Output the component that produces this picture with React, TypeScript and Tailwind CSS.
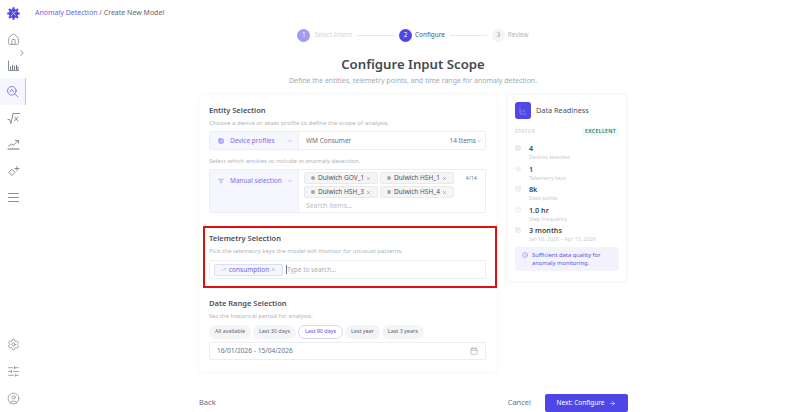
import { ArrowRight, AudioWaveform, Calendar, CalendarDays, ChartLine, ChevronDown, ChevronRight, CircleUser, Clock, Cpu, Database, Info, House, ListFilter, Settings, SlidersHorizontal, TrendingUp, X } from 'lucide-react'

const FONT = "font-['Noto_Sans','Open_Sans',sans-serif]"

function Logo() {
  return (
    <svg width="13" height="13" viewBox="0 0 24 24">
      <g fill="#4f46e5">
        <circle cx="12" cy="12" r="8.5" />
        {[0, 45, 90, 135, 180, 225, 270, 315].map((a) => (
          <rect key={a} x="10" y="0.5" width="4" height="5" transform={`rotate(${a} 12 12)`} />
        ))}
      </g>
      <path d="M7 17 17 7M9 8l7 8" stroke="#c7d2fe" strokeWidth="1.6" fill="none" />
    </svg>
  )
}

function Glyph({ children, color = '#6b7280' }: { children: React.ReactNode; color?: string }) {
  return (
    <svg width="13" height="13" viewBox="0 0 13 13" fill="none" stroke={color} strokeWidth="0.8" strokeLinecap="round" strokeLinejoin="round">
      {children}
    </svg>
  )
}

function Sidebar() {
  const iconClass = 'w-[13px] h-[13px] text-[#6b7280]'
  return (
    <aside className="relative w-[26px] h-full flex flex-col items-stretch shrink-0">
      <div className="h-[26px] flex items-center justify-center">
        <Logo />
      </div>
      <div className="flex flex-col">
        <div className="h-[26px] flex items-center justify-center"><House className={iconClass} strokeWidth={1.2} /></div>
        <div className="h-[26px] flex items-center justify-center">
          <Glyph>
            <path d="M1.5 2v9.5h10" />
            <path d="M3.5 10.5V8M5.5 10.5V6.5M7.5 10.5V7.5M9.5 10.5V6.5M11 10.5V8" strokeWidth="1" />
          </Glyph>
        </div>
        <div className="h-[27px] flex items-center justify-center bg-[#f6f6fe] border-r border-[#c3c2ee]">
          <Glyph color="#6d62e8">
            <circle cx="5.8" cy="5.8" r="4.3" />
            <path d="M9 9l3 3M4 7l1.8-2.6L7.6 7" />
          </Glyph>
        </div>
        <div className="h-[26px] flex items-center justify-center">
          <Glyph>
            <path d="M1 7.5h1.5l1.5 4L6 1.5h6.5" />
            <path d="M7.5 5l3.5 4M11 5L7.5 9" />
          </Glyph>
        </div>
        <div className="h-[27px] flex items-center justify-center">
          <Glyph>
            <path d="M1.5 8l3-2 2 1L11 3M8.5 2.5H11.5V5" />
            <path d="M1 11h11" strokeWidth="1" />
          </Glyph>
        </div>
        <div className="h-[26px] flex items-center justify-center">
          <Glyph>
            <path d="M5 4.5L8 7.5 5 10.5 2 7.5Z" />
            <path d="M10 1.5v4M8 3.5h4" />
          </Glyph>
        </div>
        <div className="h-[26px] flex items-center justify-center">
          <Glyph>
            <path d="M1.5 2.5h10M1.5 6.5h10M1.5 10.5h10" />
          </Glyph>
        </div>
      </div>
      <div className="mt-auto flex flex-col pb-[1px]">
        <div className="h-[27px] flex items-center justify-center"><Settings className={iconClass} strokeWidth={1.2} /></div>
        <div className="h-[27px] flex items-center justify-center"><SlidersHorizontal className={iconClass} strokeWidth={1.2} /></div>
        <div className="h-[26px] flex items-center justify-center"><CircleUser className={iconClass} strokeWidth={1.1} /></div>
      </div>
      <ChevronRight className="absolute left-[17px] top-[48px] w-[10px] h-[10px] text-[#4b5563]" strokeWidth={1.5} />
    </aside>
  )
}

function Stepper() {
  return (
    <div className="flex items-center justify-center h-[18px] text-[6.4px]">
      <span className="w-[13px] h-[13px] rounded-full bg-[#a29bf5] text-white flex items-center justify-center">1</span>
      <span className="ml-[4px] text-[#d1d5db]">Select Intent</span>
      <span className="w-[37px] h-px bg-[#e5e7eb] mx-[5px]" />
      <span className="w-[13px] h-[13px] rounded-full bg-[#4f46e5] text-white flex items-center justify-center">2</span>
      <span className="ml-[3px] text-[#4b5563]">Configure</span>
      <span className="w-[37px] h-px bg-[#e5e7eb] mx-[5px]" />
      <span className="w-[13px] h-[13px] rounded-full bg-[#f3f4f6] text-[#9ca3af] flex items-center justify-center">3</span>
      <span className="ml-[3px] text-[#b0b5bd]">Review</span>
    </div>
  )
}

function Chip({ label }: { label: string }) {
  return (
    <span className="h-[12px] w-[74px] px-[6px] rounded-[2px] bg-[#f5f5f6] border border-[#e9eaec] flex items-center text-[6.5px] text-[#4b5563] whitespace-nowrap">
      <span className="w-[4px] h-[4px] rounded-full bg-[#a3a8b0] mr-[3px] shrink-0" />
      {label}
      <X className="w-[5px] h-[5px] ml-auto text-[#6b7280] shrink-0" />
    </span>
  )
}

function EntitySection() {
  return (
    <section className="px-[10px] pt-[9px]">
      <h2 className="text-[7.5px] leading-[12px] font-semibold text-[#4b5058]">Entity Selection</h2>
      <p className="mt-[2px] text-[6.1px] leading-[9px] text-[#b0b5bc]">Choose a device or asset profile to define the scope of analysis.</p>
      <div className="mt-[4px] h-[19px] w-[277px] flex rounded-[2px] border border-[#eceef1] text-[6.5px]">
        <div className="w-[89px] bg-[#f6f6fe] border-r border-[#eceef1] flex items-center pl-[8px] pr-[5px] text-[#7a70ec] whitespace-nowrap">
          <Cpu className="w-[6px] h-[6px] mr-[6px]" />
          Device profiles
          <ChevronDown className="w-[6px] h-[6px] ml-auto text-[#9a94ee]" />
        </div>
        <div className="flex-1 flex items-center pl-[7px] text-[#6b7280]">
          WM Consumer
          <span className="ml-auto">14 Items</span>
          <ChevronDown className="w-[6px] h-[6px] mr-[3px] text-[#9ca3af]" />
        </div>
      </div>
      <p className="mt-[6px] text-[6.1px] leading-[9px] text-[#b0b5bc]">Select which entities to include in anomaly detection.</p>
      <div className="mt-[4px] h-[44px] w-[277px] flex rounded-[2px] border border-[#eceef1] text-[6.5px]">
        <div className="w-[89px] bg-[#f6f6fe] border-r border-[#eceef1] flex items-start pt-[6px] pl-[8px] pr-[5px] text-[#7a70ec] whitespace-nowrap">
          <ListFilter className="w-[6px] h-[6px] mr-[6px] mt-[2px]" />
          Manual selection
          <ChevronDown className="w-[6px] h-[6px] ml-auto mt-[2px] text-[#9a94ee]" />
        </div>
        <div className="relative flex-1 pl-[5px] pt-[2px]">
          <div className="grid grid-cols-[74px_74px] gap-x-[2px] gap-y-[2px]">
            <Chip label="Dulwich GOV_1" />
            <Chip label="Dulwich HSH_1" />
            <Chip label="Dulwich HSH_3" />
            <Chip label="Dulwich HSH_4" />
          </div>
          <p className="mt-[3px] ml-[2px] text-[6.8px] leading-[10px] text-[#b8bcc3]">Search items...</p>
          <span className="absolute right-[8px] top-[4px] text-[5.5px] text-[#7b8088]">4/14</span>
        </div>
      </div>
    </section>
  )
}

function TelemetrySection() {
  return (
    <section className="mt-[13px] ml-[4px] h-[62px] w-[294px] border-2 border-[#e11010] pl-[4px] pt-[4px]">
      <h2 className="text-[7.5px] leading-[12px] font-semibold text-[#4b5058]">Telemetry Selection</h2>
      <p className="mt-[1.5px] text-[6.1px] leading-[9px] text-[#b0b5bc]">Pick the telemetry keys the model will monitor for unusual patterns.</p>
      <div className="mt-[5.5px] h-[19px] w-[277px] flex items-center rounded-[2px] border border-[#eceef1] pl-[4px] text-[6.5px]">
        <span className="h-[12px] w-[69px] px-[6px] rounded-[2px] bg-[#f6f6fe] border border-[#dcdcf8] flex items-center text-[#6d62e8]">
          <TrendingUp className="w-[5px] h-[5px] mr-[3px] text-[#a29bf5]" />
          consumption
          <X className="w-[5px] h-[5px] ml-auto text-[#7b8088]" />
        </span>
        <span className="ml-[3px] w-px h-[9px] bg-[#6b7280]" />
        <span className="text-[#a9aeb6]">Type to search...</span>
      </div>
    </section>
  )
}

function DateSection() {
  const ranges = ['All available', 'Last 30 days', 'Last 90 days', 'Last year', 'Last 3 years']
  return (
    <section className="px-[10px] pt-[9px]">
      <h2 className="text-[7.5px] leading-[12px] font-semibold text-[#4b5058]">Date Range Selection</h2>
      <p className="mt-[2px] text-[6.1px] leading-[9px] text-[#b0b5bc]">Set the historical period for analysis.</p>
      <div className="mt-[4.5px] flex gap-[2px]">
        {ranges.map((r) => (
          <span
            key={r}
            className={`h-[14px] px-[6px] rounded-full flex items-center text-[5.4px] whitespace-nowrap ${
              r === 'Last 90 days' ? 'bg-white border border-[#d9d7f8] text-[#5b50e6]' : 'bg-[#f3f4f6] text-[#5f6570]'
            }`}
          >
            {r}
          </span>
        ))}
      </div>
      <div className="mt-[3.5px] h-[18px] w-[277px] flex items-center rounded-[2px] border border-[#eceef1] pl-[7px] pr-[7px] text-[6.6px] text-[#6b7280]">
        16/01/2026 - 15/04/2026
        <Calendar className="w-[8px] h-[8px] ml-auto text-[#7b8088]" strokeWidth={1.3} />
      </div>
    </section>
  )
}

function Stat({ icon, value, label }: { icon: React.ReactNode; value: string; label: string }) {
  return (
    <div className="flex h-[20.5px]">
      <div className="w-[14px] pt-[2px] text-[#d5d8dd]">{icon}</div>
      <div>
        <p className="text-[7.2px] leading-[10px] font-semibold text-[#40454d]">{value}</p>
        <p className="text-[5.3px] leading-[8px] text-[#c9cdd3] whitespace-nowrap">{label}</p>
      </div>
    </div>
  )
}

function ReadinessCard() {
  const ic = 'w-[6px] h-[6px]'
  return (
    <aside className="ml-[10px] mt-[-1px] h-[188px] w-[120px] rounded-[3px] bg-white shadow-[0_0_4px_rgba(0,0,0,0.04)] border border-[#f8f8f9] pl-[7px] pr-[7px] pt-[7px]">
      <div className="flex items-center">
        <span className="w-[16px] h-[17px] rounded-[3px] bg-[#5146e6] flex items-center justify-center">
          <ChartLine className="w-[8px] h-[8px] text-[#c7c4fa]" strokeWidth={1.3} />
        </span>
        <span className="ml-[5px] text-[7.3px] text-[#4b5058]">Data Readiness</span>
      </div>
      <div className="mt-[9px] flex items-center justify-between">
        <span className="text-[5.3px] tracking-[0.06em] text-[#c2c6cc]">STATUS</span>
        <span className="h-[8px] px-[3px] rounded-[1px] bg-[#f0faf6] flex items-center text-[5.3px] font-semibold tracking-[0.05em] text-[#2f7a5f]">EXCELLENT</span>
      </div>
      <div className="mt-[7px] flex flex-col">
        <Stat icon={<Cpu className={ic} />} value="4" label="Devices selected" />
        <Stat icon={<AudioWaveform className={ic} />} value="1" label="Telemetry keys" />
        <Stat icon={<Database className={ic} />} value="8k" label="Data points" />
        <Stat icon={<Clock className={ic} />} value="1.0 hr" label="Step Frequency" />
        <Stat icon={<CalendarDays className={ic} />} value="3 months" label="Jan 16, 2026 – Apr 15, 2026" />
      </div>
      <div className="mt-[1.5px] h-[24px] rounded-[2px] bg-[#f3f3fd] flex pl-[7px] pt-[4px] text-[5.8px] leading-[8px] text-[#5f55dc]">
        <Info className="w-[6px] h-[6px] mr-[4px] mt-[1px] shrink-0 text-[#7a70ec]" />
        <span>Sufficient data quality for<br />anomaly monitoring.</span>
      </div>
    </aside>
  )
}

export default function App() {
  return (
    <div className={`w-[800px] h-[412px] flex overflow-hidden bg-white ${FONT}`}>
      <Sidebar />
      <main className="flex-1 flex flex-col min-w-0">
        <header className="h-[26px] pl-[9px] flex items-center text-[7px]">
          <span className="text-[#6d62e8]">Anomaly Detection</span>
          <span className="text-[#5f6570]">&nbsp;/ Create New Model</span>
        </header>
        <Stepper />
        <h1 className="mt-[12px] text-center text-[13.2px] leading-[16px] font-semibold text-[#44494f]">Configure Input Scope</h1>
        <p className="mt-[3px] text-center text-[7px] leading-[11px] text-[#a3a8b0]">Define the entities, telemetry points, and time range for anomaly detection.</p>
        <div className="mt-[9px] ml-[173px] flex items-start">
          <div className="w-[298px] h-[277px] rounded-[3px] bg-white shadow-[0_0_4px_rgba(0,0,0,0.05)]">
            <EntitySection />
            <TelemetrySection />
            <DateSection />
          </div>
          <ReadinessCard />
        </div>
        <footer className="mt-[22px] ml-[173px] w-[429px] h-[18px] flex items-center text-[7.5px]">
          <span className="text-[#6b7280]">Back</span>
          <span className="ml-auto text-[#6b7280]">Cancel</span>
          <span className="ml-[14px] w-[83px] h-[18px] rounded-[2px] bg-[#4f46e5] text-[6.5px] text-white flex items-center justify-center">
            Next: Configure
            <ArrowRight className="w-[7px] h-[7px] ml-[5px]" />
          </span>
        </footer>
      </main>
    </div>
  )
}
